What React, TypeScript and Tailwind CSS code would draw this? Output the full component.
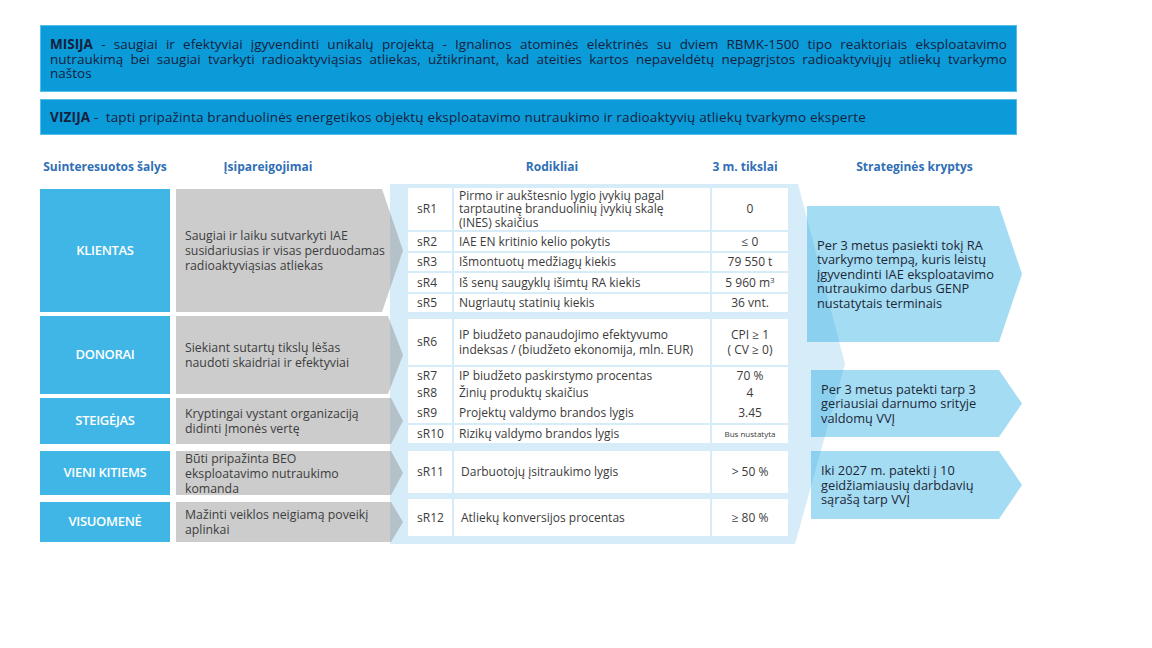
import React from "react";

type Shape = { w: number; h: number; depth: number; fill: string; opacity: number };

function ChevronBg({ w, h, depth, fill, opacity }: Shape) {
  return (
    <svg
      width={w}
      height={h}
      viewBox={`0 0 ${w} ${h}`}
      className="absolute left-0 top-0"
    >
      <polygon
        points={`0,0 ${w - depth},0 ${w},${h / 2} ${w - depth},${h} 0,${h}`}
        fill={fill}
        fillOpacity={opacity}
      />
    </svg>
  );
}

const leftRows = [
  { label: "KLIENTAS", h: 123, mt: "mt-0", depth: 21, lines: ["Saugiai ir laiku sutvarkyti IAE", "susidariusias ir visas perduodamas", "radioaktyviąsias atliekas"] },
  { label: "DONORAI", h: 78, mt: "mt-[4px]", depth: 15, lines: ["Siekiant sutartų tikslų lėšas", "naudoti skaidriai ir efektyviai"] },
  { label: "STEIGĖJAS", h: 46, mt: "mt-[4px]", depth: 12, lines: ["Kryptingai vystant organizaciją", "didinti Įmonės vertę"] },
  { label: "VIENI KITIEMS", h: 44, mt: "mt-[7px]", depth: 12, lines: ["Būti pripažinta BEO", "eksploatavimo nutraukimo", "komanda"] },
  { label: "VISUOMENĖ", h: 40, mt: "mt-[7px]", depth: 12, lines: ["Mažinti veiklos neigiamą poveikį", "aplinkai"] },
];

type Row = { c: string; d: string[]; t: React.ReactNode; h: number; lh?: string };
const groups: { mt: string; rows: Row[] }[] = [
  {
    mt: "mt-[4px]",
    rows: [
      { c: "sR1", d: ["Pirmo ir aukštesnio lygio įvykių pagal", "tarptautinę branduolinių įvykių skalę", "(INES) skaičius"], t: "0", h: 42, lh: "leading-[13.5px]" },
      { c: "sR2", d: ["IAE EN kritinio kelio pokytis"], t: "≤ 0", h: 19 },
      { c: "sR3", d: ["Išmontuotų medžiagų kiekis"], t: "79 550 t", h: 18 },
      { c: "sR4", d: ["Iš senų saugyklų išimtų RA kiekis"], t: (<span>5 960 m<sup className="text-[8px]">3</sup></span>), h: 19 },
      { c: "sR5", d: ["Nugriautų statinių kiekis"], t: "36 vnt.", h: 18 },
    ],
  },
  {
    mt: "mt-[7px]",
    rows: [
      { c: "sR6", d: ["IP biudžeto panaudojimo efektyvumo", "indeksas / (biudžeto ekonomija, mln. EUR)"], t: (<span className="leading-[15px]">CPI ≥ 1<br />( CV ≥ 0)</span>), h: 46, lh: "leading-[15px]" },
      { c: "sR7", d: ["IP biudžeto paskirstymo procentas"], t: "70 %", h: 15 },
      { c: "sR8", d: ["Žinių produktų skaičius"], t: "4", h: 14 },
    ],
  },
  {
    mt: "mt-[4px]",
    rows: [
      { c: "sR9", d: ["Projektų valdymo brandos lygis"], t: "3.45", h: 21 },
      { c: "sR10", d: ["Rizikų valdymo brandos lygis"], t: (<span className="text-[8px]">Bus nustatyta</span>), h: 18 },
    ],
  },
  {
    mt: "mt-[8px]",
    rows: [{ c: "sR11", d: ["Darbuotojų įsitraukimo lygis"], t: "> 50 %", h: 42 }],
  },
  {
    mt: "mt-[6px]",
    rows: [{ c: "sR12", d: ["Atliekų konversijos procentas"], t: "≥ 80 %", h: 37 }],
  },
];

const arrows = [
  { mt: "mt-[22px]", ml: "ml-0", w: 215, h: 136, lines: ["Per 3 metus pasiekti tokį RA", "tvarkymo tempą, kuris leistų", "įgyvendinti IAE eksploatavimo", "nutraukimo darbus GENP", "nustatytais terminais"] },
  { mt: "mt-[28px]", ml: "ml-[4px]", w: 211, h: 67, lines: ["Per 3 metus patekti tarp 3", "geriausiai darnumo srityje", "valdomų VVĮ"] },
  { mt: "mt-[14px]", ml: "ml-[4px]", w: 211, h: 68, lines: ["Iki 2027 m. patekti į 10", "geidžiamiausių darbdavių", "sąrašą tarp VVĮ"] },
];

export default function App() {
  return (
    <div className="w-[1152px] h-[648px] bg-white overflow-hidden font-['Open_Sans',sans-serif]">
      {/* Mission / vision */}
      <div className="pt-[25px] pl-[40px]">
        <div className="w-[977px] h-[67px] bg-[#0b9bd8] border border-[#55bde9] pl-[9px] pr-[9px] pt-[11px] text-[13.5px] leading-[14.5px] text-[#16213d]">
          <div className="text-justify [text-align-last:justify] whitespace-nowrap">
            <b>MISIJA</b> - saugiai ir efektyviai įgyvendinti unikalų projektą - Ignalinos atominės elektrinės su dviem RBMK-1500 tipo reaktoriais eksploatavimo
          </div>
          <div className="text-justify [text-align-last:justify] whitespace-nowrap">
            nutraukimą bei saugiai tvarkyti radioaktyviąsias atliekas, užtikrinant, kad ateities kartos nepaveldėtų nepagrįstos radioaktyviųjų atliekų tvarkymo
          </div>
          <div>naštos</div>
        </div>
        <div className="mt-[7px] w-[977px] h-[36px] bg-[#0b9bd8] border border-[#55bde9] pl-[9px] flex items-center text-[13.5px] tracking-[0.15px] text-[#16213d] whitespace-nowrap">
          <span><b>VIZIJA</b> -&nbsp; tapti pripažinta branduolinės energetikos objektų eksploatavimo nutraukimo ir radioaktyvių atliekų tvarkymo eksperte</span>
        </div>
      </div>

      {/* Headers */}
      <div className="mt-[24px] flex text-[12px] font-bold text-[#2f6fb6] leading-[16px] whitespace-nowrap">
        <div className="ml-[40px] w-[130px] text-center">Suinteresuotos šalys</div>
        <div className="ml-[6px] w-[184px] text-center">Įsipareigojimai</div>
        <div className="ml-[48px] w-[288px] text-center">Rodikliai</div>
        <div className="w-[98px] text-center">3 m. tikslai</div>
        <div className="ml-[13px] w-[215px] text-center">Strateginės kryptys</div>
      </div>

      {/* Main */}
      <div className="mt-[9px] flex items-start">
        {/* Left column */}
        <div className="relative z-10 ml-[40px] w-[363px] pt-[5px] flex flex-col">
          {leftRows.map((r) => (
            <div key={r.label} className={`${r.mt} flex`} style={{ height: r.h }}>
              <div className="w-[130px] h-full bg-[#40b6e6] flex items-center justify-center text-white font-semibold text-[13px] tracking-[-0.3px]">
                {r.label}
              </div>
              <div className="relative ml-[6px] w-[227px] h-full">
                <ChevronBg w={227} h={r.h} depth={r.depth} fill="#8e8e8e" opacity={0.45} />
                <div className="relative h-full flex items-center pl-[9px] text-[12.3px] leading-[15px] text-[#3d3d3d] whitespace-nowrap">
                  <div>
                    {r.lines.map((l, i) => (
                      <div key={i}>{l}</div>
                    ))}
                  </div>
                </div>
              </div>
            </div>
          ))}
        </div>

        {/* Middle panel */}
        <div className="relative ml-[-13px] w-[455px] h-[360px]">
          <svg width={455} height={360} viewBox="0 0 455 360" className="absolute left-0 top-0">
            <polygon points="0,0 408,0 455,180 405,360 0,360" fill="#d6ecf8" />
          </svg>
          <div className="relative pl-[18px] flex flex-col">
            {groups.map((g, gi) => (
              <div key={gi} className={`${g.mt} w-[380px] flex flex-col gap-[2px]`}>
                {g.rows.map((r) => (
                  <div
                    key={r.c}
                    className="grid grid-cols-[44px_256px_76px] gap-x-[2px] text-[12px] text-[#3b3b3b] whitespace-nowrap"
                    style={{ height: r.h }}
                  >
                    <div className="bg-white flex items-center pl-[9px]">{r.c}</div>
                    <div className={`bg-white flex items-center ${gi >= 3 ? "pl-[7px]" : "pl-[5px]"} ${r.lh ?? "leading-[14px]"}`}>
                      <div>
                        {r.d.map((l, i) => (
                          <div key={i}>{l}</div>
                        ))}
                      </div>
                    </div>
                    <div className="bg-white flex items-center justify-center text-center">{r.t}</div>
                  </div>
                ))}
              </div>
            ))}
          </div>
        </div>

        {/* Right column */}
        <div className="relative z-10 ml-[-38px] flex flex-col">
          {arrows.map((a, i) => (
            <div key={i} className={`relative ${a.mt} ${a.ml}`} style={{ width: a.w, height: a.h }}>
              <ChevronBg w={a.w} h={a.h} depth={23} fill="#1ca7e1" opacity={0.4} />
              <div className="relative h-full flex items-center pl-[10px] text-[12.8px] leading-[14.5px] text-[#1d2837] whitespace-nowrap">
                <div>
                  {a.lines.map((l, j) => (
                    <div key={j}>{l}</div>
                  ))}
                </div>
              </div>
            </div>
          ))}
        </div>
      </div>
    </div>
  );
}
